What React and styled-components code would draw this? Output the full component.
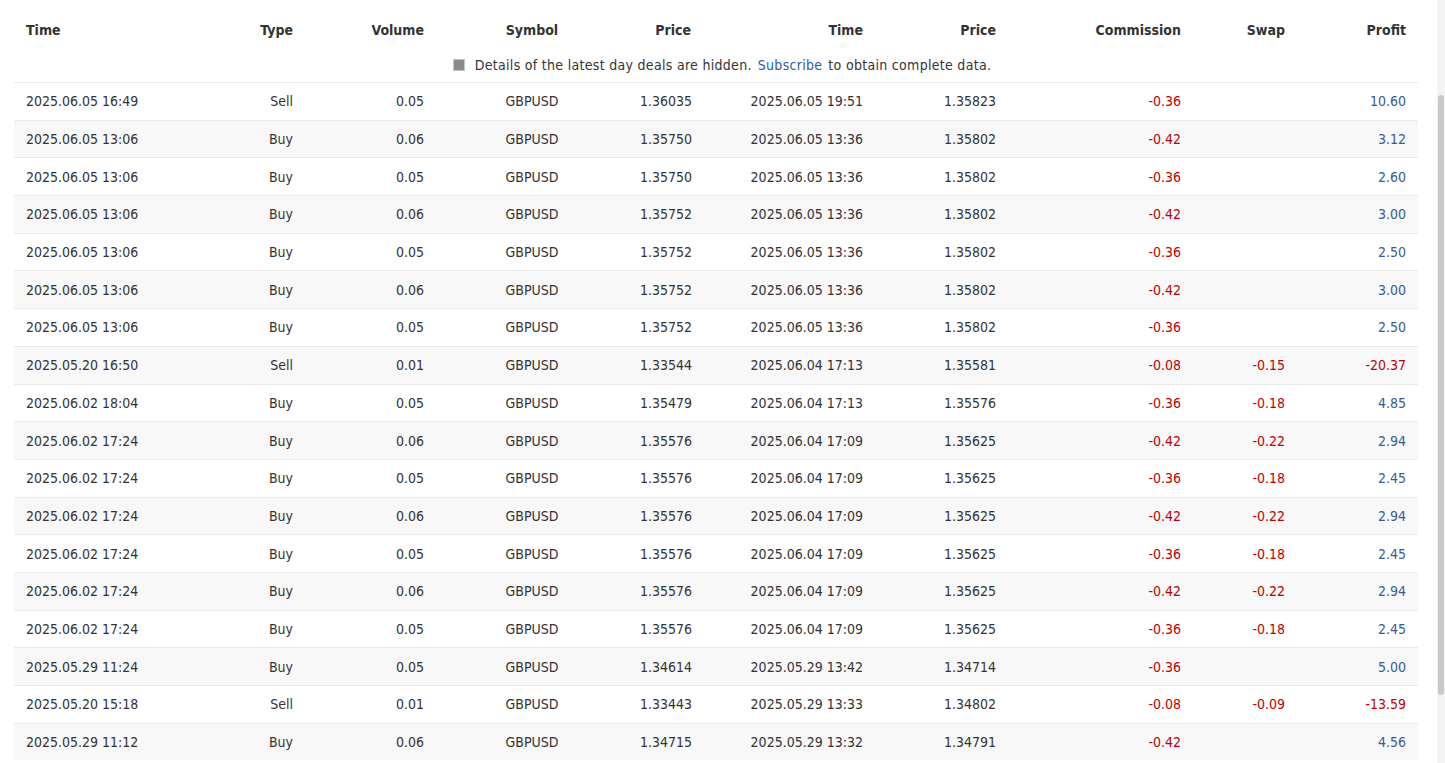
import React from "react";
import styled, { createGlobalStyle } from "styled-components";

const G = createGlobalStyle`
  body{margin:0;background:#fff;font-family:Tahoma,"DejaVu Sans Condensed","Noto Sans",sans-serif;color:#333;overflow:hidden;}
`;
const cols = "186px 105px 131px 192px 75px 172px 133px 185px 104px 121px";
const Page = styled.div`padding:0 27px 0 14px;display:flex;`;
const Table = styled.div`width:1404px;`;
const Row = styled.div`
  display:grid;grid-template-columns:${cols};height:37.7px;align-items:center;
  background:${p=>p.$alt?"#f8f8f8":"#fff"};border-top:${p=>p.$line?"1px solid #ebebeb":"none"};box-sizing:border-box;
  font-size:14px;
`;
const HeadRow = styled(Row)`height:48px;align-items:start;padding-top:22px;`;
const Cell = styled.div`
  padding:0 12px;text-align:${p=>p.$a||"right"};white-space:nowrap;
  font-weight:${p=>p.$b?700:400};
  color:${p=>p.$c==="r"?"#c00000":p.$c==="b"?"#3b5998":"#333"};
`;
const Notice = styled.div`height:34px;display:flex;align-items:center;justify-content:center;font-size:14px;color:#333;gap:6px;letter-spacing:0.3px;padding-left:12px;`;
const Ico = styled.span`width:10px;height:10px;background:#8a8a8a;border:1px solid #c4c4c4;display:inline-block;margin-right:4px;`;
const Link = styled.a`color:#2d5aa5;text-decoration:none;`;
const Scroll = styled.div`position:fixed;right:0;top:0;width:8px;height:100%;background:#f3f3f3;`;
const Thumb = styled.div`margin-top:95px;height:600px;width:6px;margin-left:1px;background:#c8c8c8;border-radius:3px;`;

const data = `2025.06.05 16:49|Sell|0.05|1.36035|2025.06.05 19:51|1.35823|-0.36||10.60
2025.06.05 13:06|Buy|0.06|1.35750|2025.06.05 13:36|1.35802|-0.42||3.12
2025.06.05 13:06|Buy|0.05|1.35750|2025.06.05 13:36|1.35802|-0.36||2.60
2025.06.05 13:06|Buy|0.06|1.35752|2025.06.05 13:36|1.35802|-0.42||3.00
2025.06.05 13:06|Buy|0.05|1.35752|2025.06.05 13:36|1.35802|-0.36||2.50
2025.06.05 13:06|Buy|0.06|1.35752|2025.06.05 13:36|1.35802|-0.42||3.00
2025.06.05 13:06|Buy|0.05|1.35752|2025.06.05 13:36|1.35802|-0.36||2.50
2025.05.20 16:50|Sell|0.01|1.33544|2025.06.04 17:13|1.35581|-0.08|-0.15|-20.37
2025.06.02 18:04|Buy|0.05|1.35479|2025.06.04 17:13|1.35576|-0.36|-0.18|4.85
2025.06.02 17:24|Buy|0.06|1.35576|2025.06.04 17:09|1.35625|-0.42|-0.22|2.94
2025.06.02 17:24|Buy|0.05|1.35576|2025.06.04 17:09|1.35625|-0.36|-0.18|2.45
2025.06.02 17:24|Buy|0.06|1.35576|2025.06.04 17:09|1.35625|-0.42|-0.22|2.94
2025.06.02 17:24|Buy|0.05|1.35576|2025.06.04 17:09|1.35625|-0.36|-0.18|2.45
2025.06.02 17:24|Buy|0.06|1.35576|2025.06.04 17:09|1.35625|-0.42|-0.22|2.94
2025.06.02 17:24|Buy|0.05|1.35576|2025.06.04 17:09|1.35625|-0.36|-0.18|2.45
2025.05.29 11:24|Buy|0.05|1.34614|2025.05.29 13:42|1.34714|-0.36||5.00
2025.05.20 15:18|Sell|0.01|1.33443|2025.05.29 13:33|1.34802|-0.08|-0.09|-13.59
2025.05.29 11:12|Buy|0.06|1.34715|2025.05.29 13:32|1.34791|-0.42||4.56`.split("\n").map(l=>l.split("|"));

export default function App(){
  return <><G/><Page><Table>
    <HeadRow>
      <Cell $b $a="left">Time</Cell><Cell $b>Type</Cell><Cell $b>Volume</Cell><Cell $b $a="center">Symbol</Cell>
      <Cell $b>Price</Cell><Cell $b>Time</Cell><Cell $b>Price</Cell><Cell $b>Commission</Cell><Cell $b>Swap</Cell><Cell $b>Profit</Cell>
    </HeadRow>
    <Notice><Ico/>Details of the latest day deals are hidden. <Link href="#">Subscribe</Link> to obtain complete data.</Notice>
    {data.map((d,i)=>(
      <Row key={i} $line $alt={i%2===1}>
        <Cell $a="left">{d[0]}</Cell><Cell>{d[1]}</Cell><Cell>{d[2]}</Cell><Cell $a="center">GBPUSD</Cell>
        <Cell>{d[3]}</Cell><Cell>{d[4]}</Cell><Cell>{d[5]}</Cell>
        <Cell $c="r">{d[6]}</Cell><Cell $c="r">{d[7]}</Cell><Cell $c={d[8].startsWith("-")?"r":"b"}>{d[8]}</Cell>
      </Row>
    ))}
  </Table></Page><Scroll><Thumb/></Scroll></>;
}
